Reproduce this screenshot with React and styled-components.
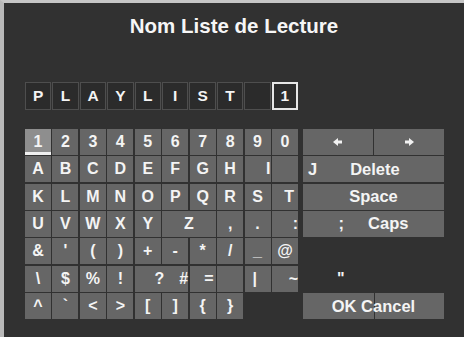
import React from "react";
import styled, { createGlobalStyle } from "styled-components";

const GlobalStyle = createGlobalStyle`
  html, body {
    margin: 0;
    padding: 0;
    background: #313131;
  }
  * { box-sizing: border-box; }
`;

const Frame = styled.div`
  width: 464px;
  height: 337px;
  background: #313131;
  border-top: 3px solid #c6c6c6;
  border-left: 4px solid #b9b9b9;
  font-family: "Liberation Sans", Arial, sans-serif;
  font-weight: bold;
  color: #f4f4f4;
  overflow: hidden;
`;

const Title = styled.h1`
  margin: 0;
  padding-top: 11px;
  height: 35px;
  line-height: 24px;
  font-size: 20.5px;
  font-weight: bold;
  text-align: center;
  color: #f6f6f6;
`;

const Body = styled.div`
  padding-left: 21px;
`;

const Field = styled.div`
  margin-top: 44px;
  width: 273px;
  height: 28px;
  display: grid;
  grid-template-columns: repeat(10, 1fr);
  column-gap: 1px;
`;

const FieldCell = styled.div`
  display: flex;
  align-items: center;
  justify-content: center;
  background: #2b2b2b;
  border: ${(p) => (p.$active ? "2px solid #e6e6e6" : "1px solid #4e4e4e")};
  font-size: 15.5px;
`;

const Keyboard = styled.div`
  margin-top: 19px;
  display: flex;
  gap: 5px;
`;

const Grid = styled.div`
  width: ${(p) => p.$width}px;
  height: 190px;
  display: grid;
  grid-template-columns: repeat(${(p) => p.$cols}, 1fr);
  grid-template-rows: repeat(7, 1fr);
  gap: 1.5px;
`;

const Key = styled.div`
  position: relative;
  grid-column: span ${(p) => p.$span || 1};
  display: flex;
  align-items: center;
  justify-content: ${(p) => p.$justify || "center"};
  gap: ${(p) => p.$gap || 0}px;
  padding: 0 ${(p) => p.$pad || 0}px;
  background: ${(p) =>
    p.$empty ? "transparent" : p.$active ? "#8e8e8e" : "#666666"};
  font-size: ${(p) => p.$size || 16}px;
  white-space: pre;
  &::after {
    content: "";
    display: ${(p) => (p.$active ? "block" : "none")};
    position: absolute;
    left: 0;
    right: 0;
    bottom: 0;
    height: 3px;
    background: #f0f0f0;
  }
`;

const Divider = styled.span`
  position: absolute;
  top: 0;
  bottom: 0;
  left: 50%;
  width: 1.5px;
  background: #313131;
`;

const Arrow = ({ dir }) => (
  <svg
    width="10"
    height="8"
    viewBox="0 0 10 8"
    style={{ transform: dir === "right" ? "scaleX(-1)" : "none" }}
  >
    <path d="M0 4 L5 0 L5 2.5 L9 2.5 L9 5.5 L5 5.5 L5 8 Z" fill="#f2f2f2" />
  </svg>
);

const field = ["P", "L", "A", "Y", "L", "I", "S", "T", "", "1"];

const left = [
  "1234567890".split("").map((c, i) => ({ l: c, active: i === 0 })),
  [
    ..."ABCDEFGH".split("").map((c) => ({ l: c })),
    { l: "I", justify: "flex-end", pad: 0 },
    { l: "" },
  ],
  [
    ..."KLMNOPQRS".split("").map((c) => ({ l: c })),
    { l: "T", justify: "flex-end", pad: 4 },
  ],
  [
    ..."UVWXY".split("").map((c) => ({ l: c })),
    { l: "Z", span: 2 },
    { l: "," },
    { l: "." },
    { l: ":", justify: "flex-end", pad: 0 },
  ],
  ["&", "'", "(", ")", "+", "-", "*", "/", "_", "@"].map((c) => ({ l: c })),
  [
    { l: "\\" },
    { l: "$" },
    { l: "%" },
    { l: "!" },
    { parts: ["?", "#"], span: 2, justify: "flex-end", gap: 15, pad: 0 },
    { l: "=", justify: "flex-end", pad: 2 },
    { l: "" },
    { l: "|", justify: "flex-start", pad: 8 },
    { l: "~", justify: "flex-end", pad: 0 },
  ],
  [
    ..."^`<>[]{}".split("").map((c) => ({ l: c })),
    { l: "", empty: true },
    { l: "", empty: true },
  ],
];

const renderKey = (k, i) => (
  <Key
    key={i}
    $span={k.span}
    $active={k.active}
    $empty={k.empty}
    $justify={k.justify}
    $pad={k.pad}
    $gap={k.gap}
  >
    {k.parts ? k.parts.map((p) => <span key={p}>{p}</span>) : k.l}
  </Key>
);

export default function App() {
  return (
    <>
      <GlobalStyle />
      <Frame>
        <Title>Nom Liste de Lecture</Title>
        <Body>
          <Field>
            {field.map((c, i) => (
              <FieldCell key={i} $active={i === field.length - 1}>
                {c}
              </FieldCell>
            ))}
          </Field>
          <Keyboard>
            <Grid $width={273} $cols={10}>
              {left.map((row) => row.map(renderKey))}
            </Grid>
            <Grid $width={141} $cols={2}>
              <Key>
                <Arrow dir="left" />
              </Key>
              <Key>
                <Arrow dir="right" />
              </Key>
              <Key $span={2} $justify="flex-start" $size={16.5} $pad={5} $gap={33}>
                <span>J</span>
                <span>Delete</span>
              </Key>
              <Key $span={2} $size={16.5}>
                Space
              </Key>
              <Key $span={2} $size={16.5} $gap={24}>
                <span>;</span>
                <span>Caps</span>
              </Key>
              <Key $span={2} $empty />
              <Key $span={2} $empty $justify="flex-start" $pad={34}>
                "
              </Key>
              <Key $span={2} $size={16.5}>
                <Divider />
                <span style={{ position: "relative" }}>OK Cancel</span>
              </Key>
            </Grid>
          </Keyboard>
        </Body>
      </Frame>
    </>
  );
}
